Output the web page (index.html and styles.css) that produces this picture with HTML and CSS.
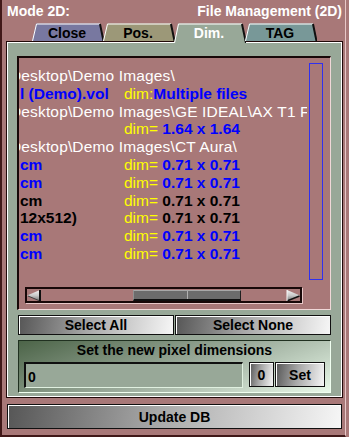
FILE: index.html
```html
<!DOCTYPE html>
<html>
<head>
<meta charset="utf-8">
<link rel="stylesheet" href="styles.css">
</head>
<body>
<div class="window">
  <div class="header"><span>Mode 2D:</span><span>File Management (2D)</span></div>
  <div class="tabs">
    <div class="tab">
      <svg width="72" height="18" viewBox="0 0 72 18"><polygon points="0,18 4,0.5 68,0.5 72,18" fill="#7878a0"/><polyline points="0.5,18 4.5,1 68,1" stroke="#fff" fill="none"/><line x1="68" y1="1" x2="71.5" y2="18" stroke="#101010" stroke-width="2"/></svg>
      <span class="tab-label">Close</span>
    </div>
    <div class="tab">
      <svg width="72" height="18" viewBox="0 0 72 18"><polygon points="0,18 4,0.5 68,0.5 72,18" fill="#9c9878"/><polyline points="0.5,18 4.5,1 68,1" stroke="#fff" fill="none"/><line x1="68" y1="1" x2="71.5" y2="18" stroke="#101010" stroke-width="2"/></svg>
      <span class="tab-label">Pos.</span>
    </div>
    <div class="tab tab-active">
      <svg width="72" height="20" viewBox="0 0 72 20"><polygon points="0,20 4,0.5 68,0.5 72,20" fill="#98a898"/><polyline points="0.5,20 4.5,1 68,1" stroke="#fff" fill="none"/><line x1="68" y1="1" x2="72" y2="20" stroke="#101010" stroke-width="2"/></svg>
      <span class="tab-label">Dim.</span>
    </div>
    <div class="tab">
      <svg width="72" height="18" viewBox="0 0 72 18"><polygon points="0,18 4,0.5 68,0.5 72,18" fill="#789898"/><polyline points="0.5,18 4.5,1 68,1" stroke="#fff" fill="none"/><line x1="68" y1="1" x2="71.5" y2="18" stroke="#101010" stroke-width="2"/></svg>
      <span class="tab-label">TAG</span>
    </div>
  </div>
  <div class="panel">
    <div class="list">
      <div class="list-top">
        <div class="rows">
          <div class="row path">Desktop\Demo Images\</div>
          <div class="row"><span class="name blue">l (Demo).vol</span><span class="dim">dim:</span><span class="val blue">Multiple files</span></div>
          <div class="row path">Desktop\Demo Images\GE IDEAL\AX T1 FLAIR\</div>
          <div class="row"><span class="name"></span><span class="dim">dim=&nbsp;</span><span class="val blue">1.64 x 1.64</span></div>
          <div class="row path">Desktop\Demo Images\CT Aura\</div>
          <div class="row"><span class="name blue">cm</span><span class="dim">dim=&nbsp;</span><span class="val blue">0.71 x 0.71</span></div>
          <div class="row"><span class="name blue">cm</span><span class="dim">dim=&nbsp;</span><span class="val blue">0.71 x 0.71</span></div>
          <div class="row"><span class="name black">cm</span><span class="dim">dim=&nbsp;</span><span class="val black">0.71 x 0.71</span></div>
          <div class="row"><span class="name black">12x512)</span><span class="dim">dim=&nbsp;</span><span class="val black">0.71 x 0.71</span></div>
          <div class="row"><span class="name blue">cm</span><span class="dim">dim=&nbsp;</span><span class="val blue">0.71 x 0.71</span></div>
          <div class="row"><span class="name blue">cm</span><span class="dim">dim=&nbsp;</span><span class="val blue">0.71 x 0.71</span></div>
        </div>
        <div class="vbar"></div>
      </div>
      <div class="hbar">
        <svg class="arrow" width="14" height="11" viewBox="0 0 14 11"><defs><linearGradient id="agl" x1="0" y1="0" x2="0" y2="1"><stop offset="0" stop-color="#f4f4f4"/><stop offset="0.5" stop-color="#c8c8c8"/><stop offset="1" stop-color="#707070"/></linearGradient></defs><polygon points="0,5.5 13,0 13,11" fill="url(#agl)"/><line x1="1" y1="6" x2="13" y2="11" stroke="#404040"/><line x1="13" y1="0" x2="13" y2="11" stroke="#101010" stroke-width="2"/></svg>
        <div class="track"><div class="thumb"><div class="thumb-part"></div><div class="thumb-part"></div></div></div>
        <svg class="arrow" width="14" height="11" viewBox="0 0 14 11"><defs><linearGradient id="agr" x1="0" y1="0" x2="0" y2="1"><stop offset="0" stop-color="#f4f4f4"/><stop offset="0.5" stop-color="#c8c8c8"/><stop offset="1" stop-color="#707070"/></linearGradient></defs><polygon points="14,5.5 1,0 1,11" fill="url(#agr)"/><line x1="1" y1="11" x2="13.5" y2="6" stroke="#101010" stroke-width="1.5"/><line x1="1" y1="0" x2="1" y2="11" stroke="#f8f8f8"/></svg>
      </div>
    </div>
    <div class="select-row">
      <button class="btn">Select All</button>
      <button class="btn">Select None</button>
    </div>
    <div class="group">
      <div class="group-title">Set the new pixel dimensions</div>
      <div class="group-row">
        <div class="input">0</div>
        <button class="btn btn-small">0</button>
        <button class="btn btn-set">Set</button>
      </div>
    </div>
  </div>
  <button class="btn update">Update DB</button>
</div>
</body>
</html>
```
FILE: styles.css
```css
* { box-sizing: border-box; }
html, body { margin: 0; padding: 0; }
body {
  width: 349px;
  height: 437px;
  overflow: hidden;
  background: #a87878;
  font-family: "Liberation Sans", Arial, sans-serif;
}
.window {
  width: 346px;
  height: 437px;
  border-left: 2px solid #401818;
  border-right: 1px solid #e8c8c8;
  border-bottom: 2px solid #401818;
}
.header {
  height: 23px;
  display: flex;
  justify-content: space-between;
  padding: 0 3px 0 5px;
  line-height: 22px;
  color: #fff;
  font-weight: bold;
  font-size: 14px;
}
.tabs {
  display: flex;
  height: 19px;
  margin: 0 0 -1px 30px;
  position: relative;
  z-index: 1;
}
.tab {
  display: grid;
  width: 72px;
  margin-right: -1px;
  align-items: start;
}
.tab > * { grid-area: 1 / 1; }
.tab svg { display: block; }
.tab-label {
  text-align: center;
  font-weight: bold;
  font-size: 14px;
  line-height: 18px;
  padding: 1px 2px 0 0;
  color: #000;
}
.tab-active .tab-label { color: #fff; }
.panel {
  margin-left: 4px;
  width: 337px;
  height: 357px;
  border: 1px solid #200808;
  box-shadow: inset 0 0 0 1px #fff;
  background: #98a898;
  padding: 14px 11px 0 10px;
}
.list {
  height: 254px;
  border-top: 2px solid #180808;
  border-left: 2px solid #180808;
  border-right: 1px solid #f0d8d8;
  border-bottom: 1px solid #f0d8d8;
  background: #a87878;
}
.list-top {
  display: flex;
  height: 223px;
}
.rows {
  width: 288px;
  overflow: hidden;
  padding: 9px 0 0 1px;
  font-size: 15.5px;
}
.row {
  display: flex;
  height: 17.8px;
  line-height: 17.8px;
  white-space: nowrap;
}
.path {
  color: #fff;
  margin-left: -10px;
  letter-spacing: 0.15px;
}
.name {
  width: 104px;
  flex: none;
  font-weight: bold;
  overflow: hidden;
}
.dim { color: #ffff00; }
.val { font-weight: bold; }
.blue { color: #0000ff; }
.black { color: #000; }
.vbar {
  width: 14px;
  height: 217px;
  margin: 5px 0 0 2px;
  border: 1px solid #3030f0;
}
.hbar {
  margin: 6px 0 0 6px;
  width: 277px;
  height: 16px;
  border: 2px solid #180808;
  box-shadow: 1px 1px 0 #e8c8c8;
  display: flex;
  align-items: center;
}
.arrow { display: block; flex: none; }
.track {
  flex: 1;
  height: 12px;
}
.thumb {
  margin: 1px 0 0 92px;
  width: 108px;
  height: 11px;
  display: flex;
  background: #6c6c6c;
  border-top: 1px solid #a8a8a8;
  border-left: 1px solid #909090;
  border-right: 1px solid #202020;
  border-bottom: 2px solid #101010;
}
.thumb-part { flex: 1; }
.thumb-part + .thumb-part { border-left: 1px solid #b0b0b0; }
.btn {
  display: block;
  margin: 0;
  padding: 0;
  font-family: "Liberation Sans", Arial, sans-serif;
  font-weight: bold;
  font-size: 14px;
  color: #000;
  border: 1px solid #101010;
  box-shadow: inset 1px 1px 0 #fff;
  background: linear-gradient(100deg, #565656 0%, #a8a8a8 45%, #f6f6f6 100%);
  text-align: center;
}
.select-row {
  display: grid;
  grid-template-columns: 1fr 1fr;
  gap: 1px;
  margin: 5px 0 0 1px;
  width: 313px;
  height: 20px;
}
.group {
  margin: 5px 0 0 1px;
  width: 313px;
  height: 53px;
  border-top: 1px solid #203020;
  border-left: 1px solid #203020;
  border-right: 1px solid #f0fff0;
  border-bottom: 1px solid #f0fff0;
  background: linear-gradient(160deg, #4c6448 0%, #98a898 50%, #e8f8e8 100%);
  padding: 0 5px 0 5px;
}
.group-title {
  height: 18px;
  line-height: 18px;
  text-align: center;
  font-weight: bold;
  font-size: 14px;
  color: #000;
}
.group-row {
  display: flex;
  margin-top: 3px;
  height: 26px;
}
.input {
  width: 219px;
  height: 26px;
  border-top: 2px solid #101010;
  border-left: 2px solid #101010;
  border-right: 1px solid #e0f0e0;
  border-bottom: 1px solid #e0f0e0;
  background: #98a898;
  font-weight: bold;
  font-size: 14px;
  line-height: 16px;
  padding: 5px 0 0 2px;
}
.btn-small {
  width: 25px;
  height: 25px;
  margin-left: 6px;
}
.btn-set {
  width: 50px;
  height: 25px;
  margin-left: 1px;
}
.update {
  margin: 6px 0 0 5px;
  width: 335px;
  height: 25px;
}
```
